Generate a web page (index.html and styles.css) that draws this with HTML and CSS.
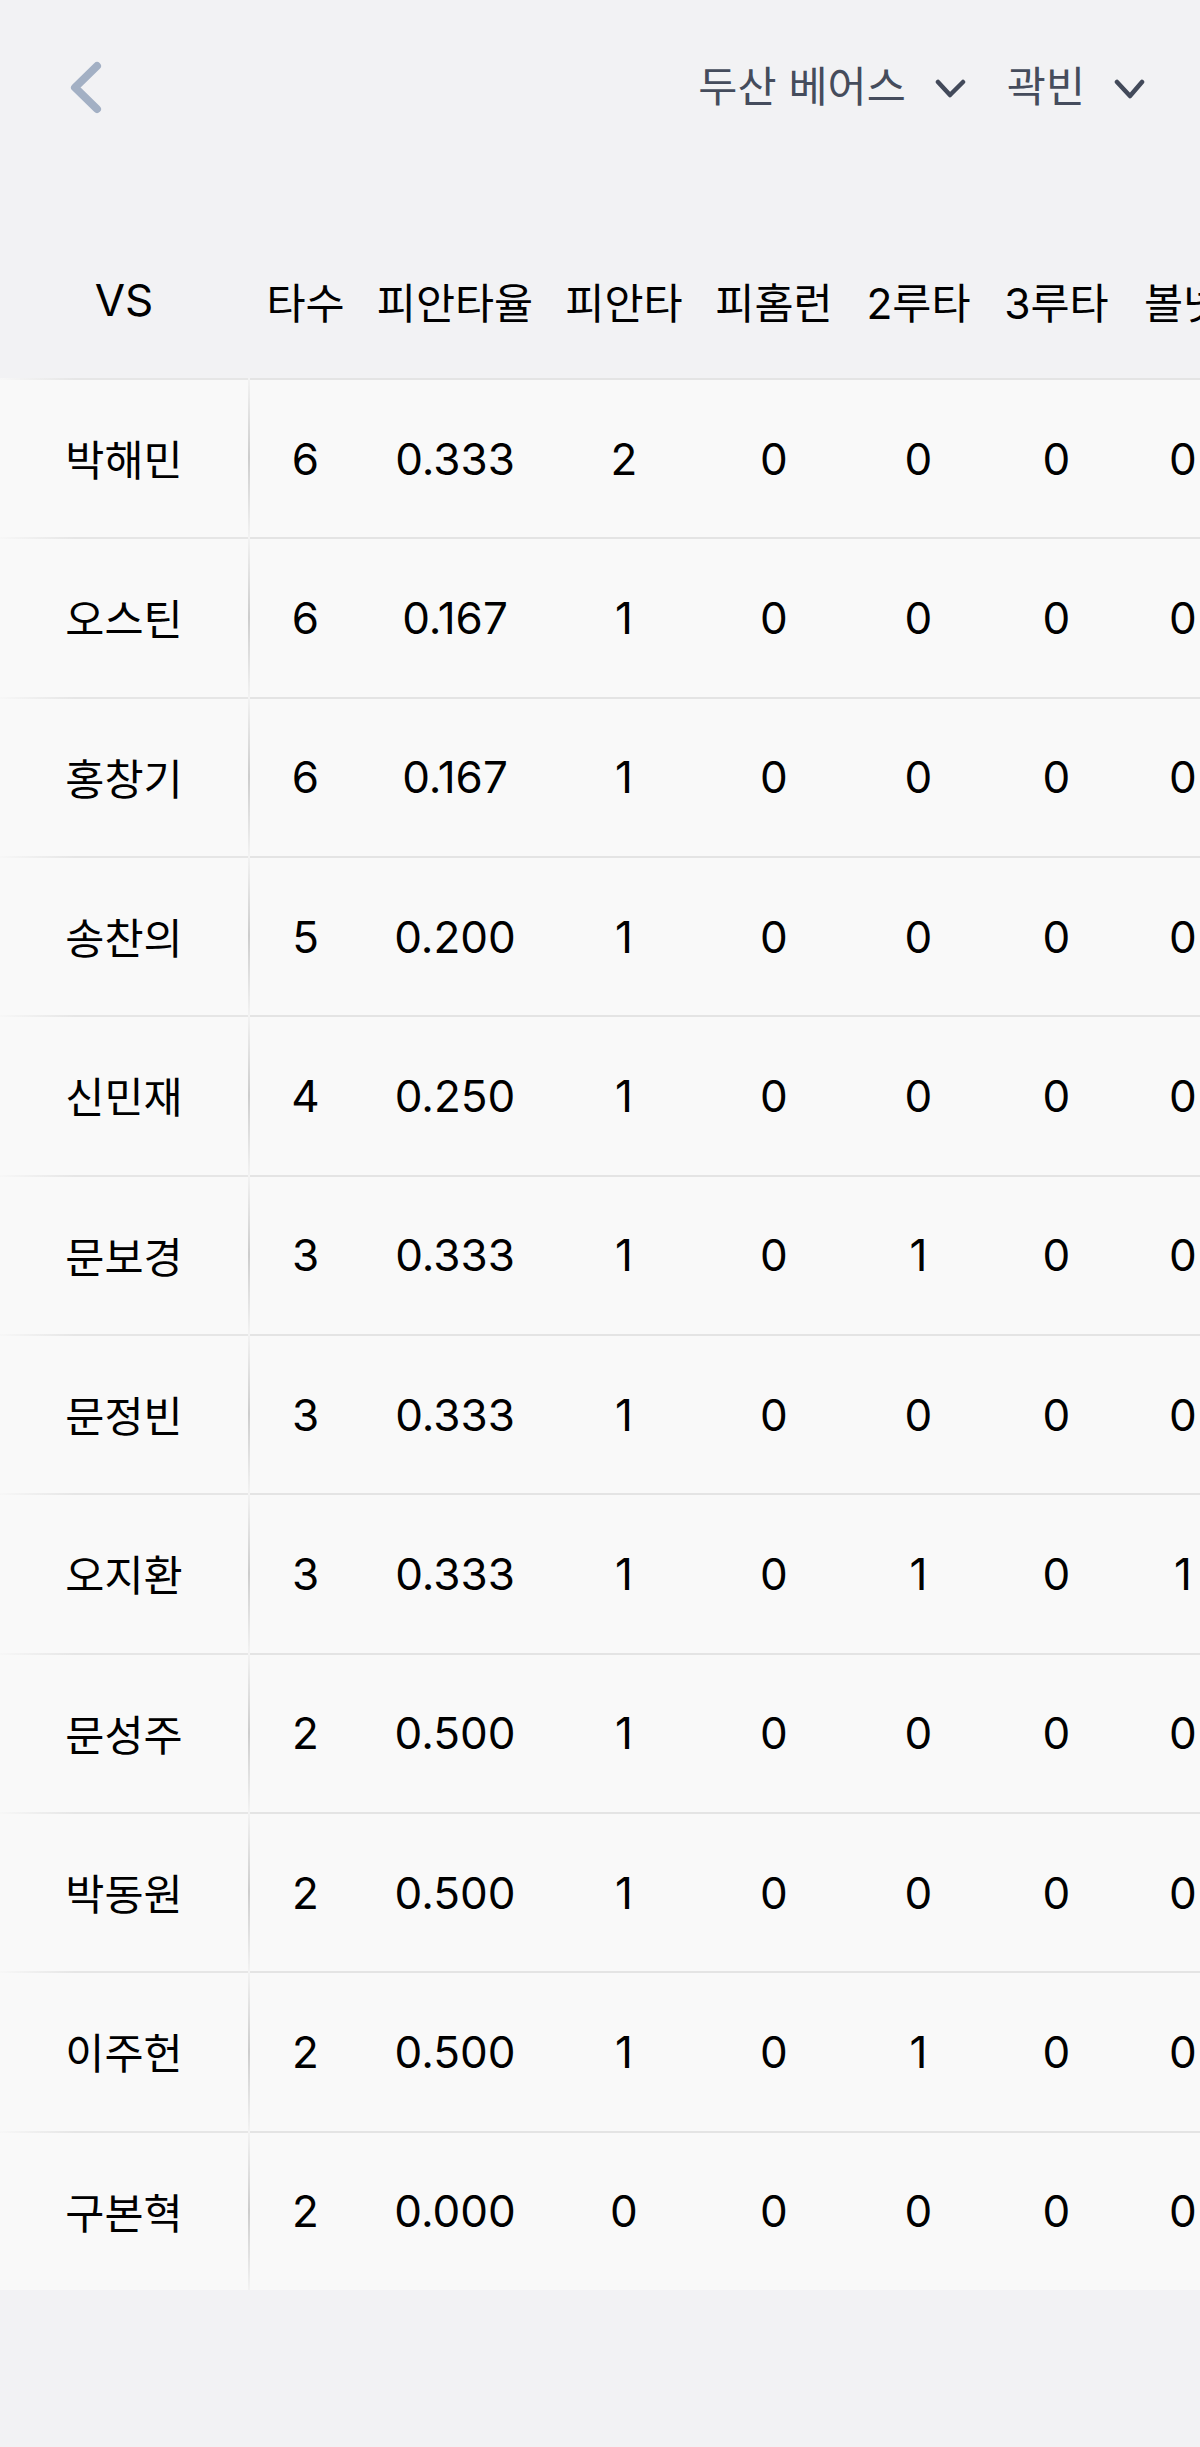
FILE: index.html
```html
<!DOCTYPE html>
<html lang="ko">
<head>
<meta charset="utf-8">
<title>VS 기록</title>
<link rel="stylesheet" href="styles.css">
</head>
<body>
<div class="page">
  <header class="topbar">
    <button class="back" aria-label="뒤로">
      <svg width="40" height="60" viewBox="0 0 40 60"><path d="M31 8 L9 29.5 L31 51" fill="none" stroke="#a3b0c4" stroke-width="8" stroke-linecap="round" stroke-linejoin="round"/></svg>
    </button>
    <div class="selectors">
      <div class="select team">두산 베어스
        <svg class="caret" width="32" height="22" viewBox="0 0 32 22"><path d="M3 4 L15 17 L28 4" fill="none" stroke="#434a5a" stroke-width="4.5" stroke-linecap="round" stroke-linejoin="round"/></svg>
      </div>
      <div class="select player">곽빈
        <svg class="caret" width="32" height="22" viewBox="0 0 32 22"><path d="M3 4 L16 18 L28 4" fill="none" stroke="#434a5a" stroke-width="4.5" stroke-linecap="round" stroke-linejoin="round"/></svg>
      </div>
    </div>
  </header>

  <section class="table">
    <div class="row head">
      <div class="name">VS</div>
      <div class="cell">타수</div>
      <div class="cell">피안타율</div>
      <div class="cell">피안타</div>
      <div class="cell">피홈런</div>
      <div class="cell">2루타</div>
      <div class="cell">3루타</div>
      <div class="cell">볼넷</div>
    </div>

    <div class="row body"><div class="name">박해민</div><div class="cell num">6</div><div class="cell num">0.333</div><div class="cell num">2</div><div class="cell num">0</div><div class="cell num">0</div><div class="cell num">0</div><div class="cell num">0</div></div>
    <div class="row body"><div class="name">오스틴</div><div class="cell num">6</div><div class="cell num">0.167</div><div class="cell num">1</div><div class="cell num">0</div><div class="cell num">0</div><div class="cell num">0</div><div class="cell num">0</div></div>
    <div class="row body"><div class="name">홍창기</div><div class="cell num">6</div><div class="cell num">0.167</div><div class="cell num">1</div><div class="cell num">0</div><div class="cell num">0</div><div class="cell num">0</div><div class="cell num">0</div></div>
    <div class="row body"><div class="name">송찬의</div><div class="cell num">5</div><div class="cell num">0.200</div><div class="cell num">1</div><div class="cell num">0</div><div class="cell num">0</div><div class="cell num">0</div><div class="cell num">0</div></div>
    <div class="row body"><div class="name">신민재</div><div class="cell num">4</div><div class="cell num">0.250</div><div class="cell num">1</div><div class="cell num">0</div><div class="cell num">0</div><div class="cell num">0</div><div class="cell num">0</div></div>
    <div class="row body"><div class="name">문보경</div><div class="cell num">3</div><div class="cell num">0.333</div><div class="cell num">1</div><div class="cell num">0</div><div class="cell num">1</div><div class="cell num">0</div><div class="cell num">0</div></div>
    <div class="row body"><div class="name">문정빈</div><div class="cell num">3</div><div class="cell num">0.333</div><div class="cell num">1</div><div class="cell num">0</div><div class="cell num">0</div><div class="cell num">0</div><div class="cell num">0</div></div>
    <div class="row body"><div class="name">오지환</div><div class="cell num">3</div><div class="cell num">0.333</div><div class="cell num">1</div><div class="cell num">0</div><div class="cell num">1</div><div class="cell num">0</div><div class="cell num">1</div></div>
    <div class="row body"><div class="name">문성주</div><div class="cell num">2</div><div class="cell num">0.500</div><div class="cell num">1</div><div class="cell num">0</div><div class="cell num">0</div><div class="cell num">0</div><div class="cell num">0</div></div>
    <div class="row body"><div class="name">박동원</div><div class="cell num">2</div><div class="cell num">0.500</div><div class="cell num">1</div><div class="cell num">0</div><div class="cell num">0</div><div class="cell num">0</div><div class="cell num">0</div></div>
    <div class="row body"><div class="name">이주헌</div><div class="cell num">2</div><div class="cell num">0.500</div><div class="cell num">1</div><div class="cell num">0</div><div class="cell num">1</div><div class="cell num">0</div><div class="cell num">0</div></div>
    <div class="row body"><div class="name">구본혁</div><div class="cell num">2</div><div class="cell num">0.000</div><div class="cell num">0</div><div class="cell num">0</div><div class="cell num">0</div><div class="cell num">0</div><div class="cell num">0</div></div>
  </section>
</div>
</body>
</html>
```

FILE: styles.css
```css
html, body {
  margin: 0;
  padding: 0;
  background: #f2f2f4;
}

body {
  font-family: "Inter", "Noto Sans CJK KR", sans-serif;
  color: #000;
  width: 1200px;
  min-height: 2447px;
  overflow: hidden;
}

.page {
  width: 1200px;
}

.topbar {
  height: 174px;
  display: flex;
  align-items: center;
  justify-content: space-between;
  padding: 0 54px 0 66px;
  box-sizing: border-box;
}

.back {
  border: 0;
  background: none;
  padding: 0;
  width: 40px;
  height: 60px;
  display: flex;
  margin-top: 2px;
}

.selectors {
  display: flex;
  align-items: center;
  gap: 40px;
}

.select {
  display: flex;
  align-items: center;
  gap: 29px;
  font-size: 42.5px;
  color: #454c5c;
  line-height: 1;
}

.caret {
  display: block;
  margin-top: 4px;
}

.table {
  margin-top: 48px;
  width: 1200px;
  overflow: hidden;
}

.row {
  display: grid;
  grid-template-columns: 250px 111px 188px 150px 150px 139px 137px 116px;
  width: max-content;
}

.row > div {
  display: flex;
  align-items: center;
  justify-content: center;
  white-space: nowrap;
}

.head {
  height: 156px;
  font-size: 42.5px;
}

.head .name {
  font-size: 44px;
  padding-right: 2px;
}

.body {
  height: 159.33px;
  background: #f9f9f9;
}

.body .cell {
  border-top: 2px solid #e4e4e4;
}

.name {
  position: relative;
}

.body .name {
  font-size: 42.5px;
  background: #f9f9f9;
  padding-right: 2px;
}

.body .name::before {
  content: "";
  position: absolute;
  left: 0;
  right: 0;
  top: 0;
  height: 2px;
  background: linear-gradient(to right, #f7f7f7, #e6e6e6 30%, #e6e6e6);
}

.body .name::after {
  content: "";
  position: absolute;
  right: 0;
  top: 0;
  bottom: 0;
  width: 2px;
  background: linear-gradient(to bottom, #f3f3f3, #cdcdcd 50%, #f3f3f3);
}

.num {
  font-size: 44px;
}
```
